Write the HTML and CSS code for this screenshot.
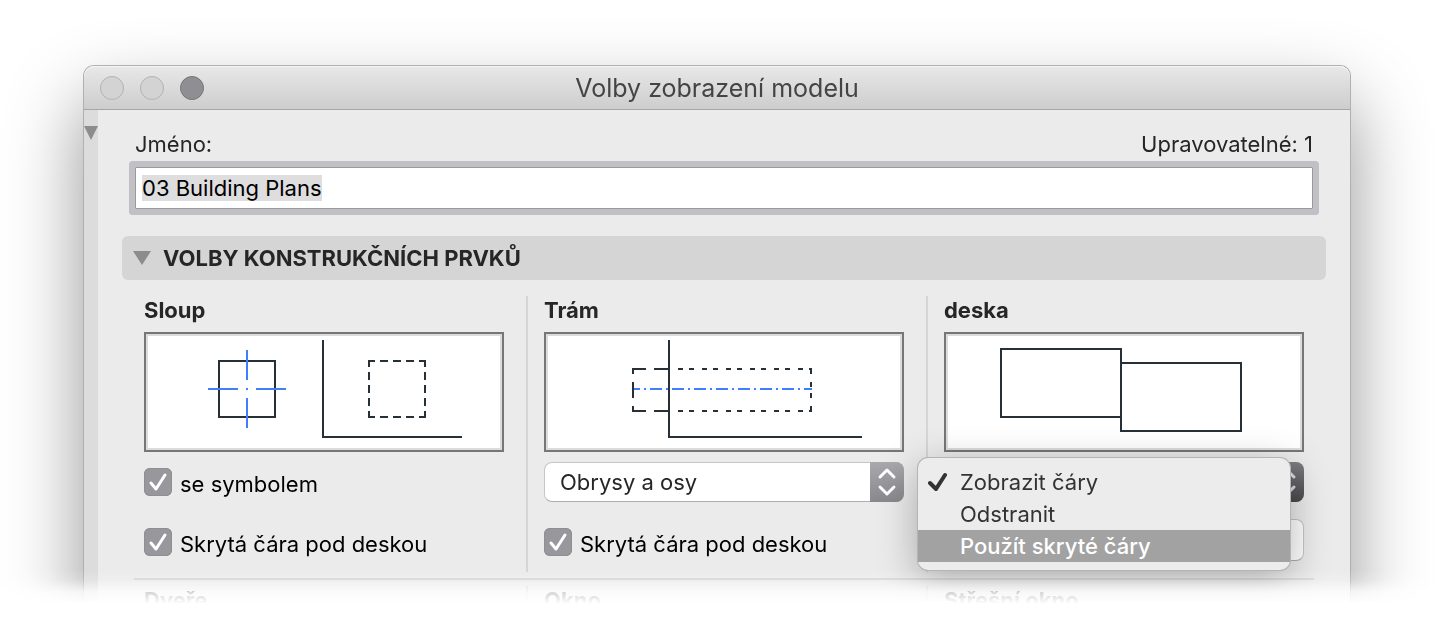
FILE: index.html
```html
<!DOCTYPE html>
<html lang="cs">
<head>
  <meta charset="UTF-8">
  <meta name="viewport" content="width=device-width, initial-scale=1.0">
  <title>Volby zobrazení modelu</title>
  <link rel="stylesheet" href="styles.css">
</head>
<body>

  <div class="stage">
    <div class="window">
      <header class="titlebar">
        <div class="lights">
          <button class="light" aria-label="Zavřít"></button>
          <button class="light" aria-label="Minimalizovat"></button>
          <button class="light light-on" aria-label="Zvětšit"></button>
        </div>
        <h1>Volby zobrazení modelu</h1>
      </header>

      <div class="body">
        <div class="rail">
          <svg width="14" height="14" viewBox="0 0 14 14"><path d="M0 0H14L7 14Z" fill="#8c8c8c"/></svg>
        </div>

        <main class="content">
          <div class="name-field">
            <div class="name-labels">
              <label for="viewName">Jméno:</label>
              <span>Upravovatelné: 1</span>
            </div>
            <input type="text" id="viewName" class="name-input" value="03 Building Plans">
          </div>

          <button class="section-header">
            <svg width="18" height="14" viewBox="0 0 18 14"><path d="M0 0H18L9 14Z" fill="#8c8c8c"/></svg>
            VOLBY KONSTRUKČNÍCH PRVKŮ
          </button>

          <div class="columns">
            <!-- Column -->
            <section class="column">
              <h2>Sloup</h2>
              <div class="preview">
                <svg width="352" height="112" viewBox="0 0 352 112" fill="none" stroke="#263036" stroke-width="2">
                  <rect x="71" y="25" width="56" height="56"/>
                  <path d="M99 14V44M99 52V54M99 62V92M60 53H90M108 53H138" stroke="#3f7ffb"/>
                  <path d="M175 4V101H314"/>
                  <rect x="221" y="25" width="56" height="56" stroke-dasharray="12 5 8 5 8 5 8 5" stroke-dashoffset="6"/>
                </svg>
              </div>
              <label class="check-row">
                <span class="checkbox">
                  <input type="checkbox" checked>
                  <svg width="28" height="28" viewBox="0 0 28 28"><path d="M7 15L12 21L21 7"/></svg>
                </span>
                <span class="check-text">se symbolem</span>
              </label>
              <label class="check-row">
                <span class="checkbox">
                  <input type="checkbox" checked>
                  <svg width="28" height="28" viewBox="0 0 28 28"><path d="M7 15L12 21L21 7"/></svg>
                </span>
                <span class="check-text">Skrytá čára pod deskou</span>
              </label>
            </section>

            <!-- Beam -->
            <section class="column">
              <h2>Trám</h2>
              <div class="preview">
                <svg width="352" height="112" viewBox="0 0 352 112" fill="none" stroke="#263036" stroke-width="2">
                  <path d="M84 33H98M106 33H121M84 75H98M106 75H121M85 32V38M85 46V62M85 70V76"/>
                  <path d="M130 33H264M130 75H264" stroke-dasharray="5 6 5 8"/>
                  <path d="M263 32V38M263 46V51M263 57V62M263 70V76"/>
                  <path d="M86 53H264" stroke="#3f7ffb" stroke-dasharray="12 4 2 4" stroke-dashoffset="6"/>
                  <path d="M121 4V101H314"/>
                </svg>
              </div>
              <div class="select">
                <select aria-label="Zobrazení trámu">
                  <option>Obrysy a osy</option>
                </select>
                <svg class="stepper" width="34" height="40" viewBox="0 0 34 40"><path d="M10 15L17 8L24 15M10 25L17 32L24 25"/></svg>
              </div>
              <label class="check-row">
                <span class="checkbox">
                  <input type="checkbox" checked>
                  <svg width="28" height="28" viewBox="0 0 28 28"><path d="M7 15L12 21L21 7"/></svg>
                </span>
                <span class="check-text">Skrytá čára pod deskou</span>
              </label>
            </section>

            <!-- Slab, with its list open -->
            <section class="column">
              <h2>deska</h2>
              <div class="preview">
                <svg width="352" height="112" viewBox="0 0 352 112" fill="none" stroke="#263036" stroke-width="2">
                  <rect x="53" y="13" width="120" height="68"/>
                  <rect x="173" y="27" width="120" height="68"/>
                </svg>
              </div>
              <div class="select select-open">
                <button class="select-face" aria-label="Zobrazení desky" aria-expanded="true"></button>
                <svg class="stepper" width="34" height="40" viewBox="0 0 34 40"><path d="M10 15L17 8L24 15M10 25L17 32L24 25"/></svg>
                <ul class="menu">
                  <li><button class="menu-item">
                    <svg class="tick" width="20" height="20" viewBox="0 0 20 20"><path d="M2 11L8 17L17 3"/></svg>
                    Zobrazit čáry
                  </button></li>
                  <li><button class="menu-item">Odstranit</button></li>
                  <li><button class="menu-item active">Použít skryté čáry</button></li>
                </ul>
              </div>
              <button class="plain-button" aria-label="Nastavení čar"></button>
            </section>
          </div>

          <hr class="divider">

          <div class="columns columns-next">
            <section class="column"><h2>Dveře</h2></section>
            <section class="column"><h2>Okno</h2></section>
            <section class="column"><h2>Střešní okno</h2></section>
          </div>
        </main>
      </div>
    </div>
  </div>

  <script>
    // The name is selected when the dialog opens
    const viewName = document.getElementById('viewName');
    viewName.focus();
    viewName.select();
  </script>

</body>
</html>
```
FILE: styles.css
```css
* {
  box-sizing: border-box;
}

body {
  margin: 0;
  background-color: #fff;
  color: #262626;
  font-family: Inter, "Liberation Sans", sans-serif;
  font-size: 22px;
  line-height: 28px;
}

button, input, select {
  font: inherit;
  color: inherit;
  margin: 0;
}

/* The dialog fades out at its lower edge */
.stage {
  padding: 65px 99px 0 83px;
  overflow: hidden;
  -webkit-mask-image: linear-gradient(to top, transparent 16px, rgba(0, 0, 0, 0.2) 28px, rgba(0, 0, 0, 0.8) 40px, #000 50px);
  mask-image: linear-gradient(to top, transparent 16px, rgba(0, 0, 0, 0.2) 28px, rgba(0, 0, 0, 0.8) 40px, #000 50px);
}

.window {
  border: 1px solid #b0b0b0;
  border-bottom: none;
  border-radius: 11px 11px 0 0;
  background-color: #ebebeb;
  box-shadow: 0 36px 76px rgba(0, 0, 0, 0.42);
}

.titlebar {
  display: grid;
  grid-template-columns: 1fr auto 1fr;
  align-items: center;
  height: 44px;
  padding: 0 16px;
  border-bottom: 1px solid #a6a6a6;
  border-radius: 10px 10px 0 0;
  background: linear-gradient(#e8e8e8, #cdcdcd);
  box-shadow: inset 0 1px 0 #f6f6f6;
}

.titlebar h1 {
  margin: 0;
  font-size: 25px;
  font-weight: 400;
  color: #444;
}

.lights {
  display: flex;
  gap: 16px;
}

.light {
  width: 24px;
  height: 24px;
  padding: 0;
  border: 1px solid #b3b3b3;
  border-radius: 50%;
  background-color: #d3d3d3;
}

.light-on {
  border-color: #75757a;
  background-color: #8e8e93;
}

.body {
  display: flex;
}

.rail {
  width: 14px;
  padding-top: 16px;
  background-color: #dcdcdc;
  line-height: 0;
}

.content {
  flex: 1;
  padding: 20px 24px 0;
}

.name-field {
  padding: 0 13px;
}

.name-labels {
  display: flex;
  justify-content: space-between;
}

.name-input {
  display: block;
  width: 100%;
  height: 42px;
  margin-top: 9px;
  padding: 0 6px;
  border: 1px solid #9a9a9d;
  border-radius: 1px;
  outline: none;
  background-color: #fff;
  color: #000;
  box-shadow: 0 0 0 6px #c1c0c4;
}

.name-input::selection {
  background-color: #dedede;
  color: #000;
}

.section-header {
  display: flex;
  align-items: center;
  gap: 12px;
  width: 100%;
  height: 44px;
  margin-top: 27px;
  padding: 0 11px;
  border: none;
  border-radius: 6px;
  background-color: #d5d5d5;
  font-weight: 700;
}

.columns {
  display: grid;
  grid-template-columns: repeat(3, 1fr);
  margin: 16px 0 0 4px;
}

.column {
  padding: 0 22px 10px 16px;
  border-left: 2px solid #d5d5d5;
}

.column:first-child {
  border-left-color: transparent;
}

.column h2 {
  margin: 0;
  font-size: 22px;
  font-weight: 700;
}

.preview {
  display: flex;
  justify-content: center;
  margin: 8px 0 10px;
  border: 2px solid #767676;
  background-color: #fff;
  padding: 2px;
  box-shadow: inset 0 0 0 2px #dcdcdc;
}

.check-row {
  display: flex;
  align-items: center;
  gap: 8px;
  height: 40px;
  color: #000;
}

.check-row + .check-row,
.select + .check-row {
  margin-top: 20px;
}

.check-text {
  padding-top: 4px;
}

.checkbox {
  display: grid;
}

.checkbox input,
.checkbox svg {
  grid-area: 1 / 1;
}

.checkbox input {
  appearance: none;
  width: 28px;
  height: 28px;
  border-radius: 6px;
  background-color: #98979c;
  box-shadow: inset 0 0 0 1px #8f8e93;
}

.checkbox svg {
  pointer-events: none;
  fill: none;
  stroke: #fff;
  stroke-width: 3;
  stroke-linecap: round;
  stroke-linejoin: round;
}

.select {
  position: relative;
  height: 40px;
}

.select select,
.select-face,
.plain-button {
  display: block;
  width: 100%;
  height: 40px;
  appearance: none;
  border: 1px solid #c6c6c6;
  border-bottom-color: #adadad;
  border-radius: 8px;
  background-color: #fff;
}

.select select {
  padding: 0 40px 0 15px;
}

.plain-button {
  height: 42px;
  margin-top: 17px;
}

/* Arrows over the right end of the field */
.stepper {
  position: absolute;
  top: 0;
  right: 0;
  border-radius: 0 8px 8px 0;
  background: linear-gradient(#a9a8ad, #89888d);
  pointer-events: none;
  fill: none;
  stroke: #fff;
  stroke-width: 3;
  stroke-linecap: round;
  stroke-linejoin: round;
}

.select-open .stepper {
  background: linear-gradient(#7d7c81, #4a494e);
  stroke: #ddd;
}

.menu {
  position: absolute;
  z-index: 10;
  top: -4px;
  left: -26px;
  right: 14px;
  margin: 0;
  padding: 8px 0;
  list-style: none;
  border-radius: 10px;
  background-color: #ececec;
  box-shadow: 0 0 0 1px #b4b4b4, 0 10px 40px rgba(0, 0, 0, 0.3);
}

.menu-item {
  position: relative;
  display: block;
  width: 100%;
  height: 32px;
  padding: 0 42px;
  border: none;
  background: none;
  color: #333;
  text-align: left;
}

.menu-item.active {
  background-color: #a2a2a2;
  color: #fff;
  font-weight: 500;
}

.tick {
  position: absolute;
  top: 6px;
  left: 10px;
  fill: none;
  stroke: #333;
  stroke-width: 4;
  stroke-linecap: round;
  stroke-linejoin: round;
}

.divider {
  height: 2px;
  margin: 6px 12px;
  border: none;
  background-color: #d5d5d5;
}

.columns-next {
  margin-top: 0;
}

.columns-next .column {
  padding-bottom: 6px;
}
```
